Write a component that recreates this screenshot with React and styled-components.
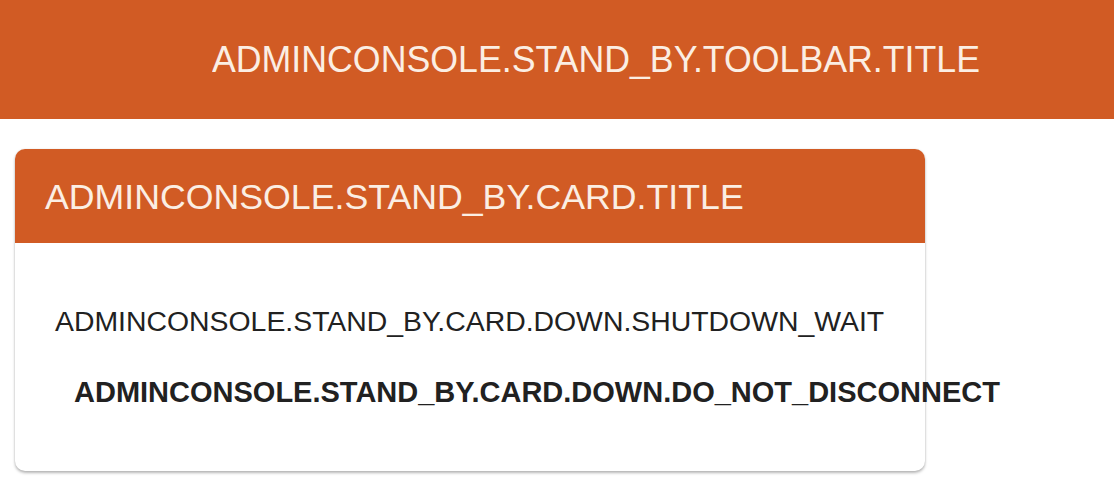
import React from "react";
import styled, { createGlobalStyle } from "styled-components";

const Global = createGlobalStyle`
  html, body { margin: 0; padding: 0; background: #ffffff; }
  body { font-family: "Liberation Sans", Arial, sans-serif; color: #212121; }
`;

const Toolbar = styled.header`
  height: 119px;
  background: #d15b24;
  display: flex;
  align-items: center;
  padding-left: 212px;
`;

const ToolbarTitle = styled.h1`
  margin: 0;
  font-weight: 400;
  font-size: 36px;
  color: #fbeee3;
  line-height: 1;
  transform: scaleX(0.992);
  transform-origin: left center;
`;

const Content = styled.main`
  padding: 30px 15px;
  width: 910px;
`;

const Card = styled.section`
  background: #fff;
  border-radius: 10px;
  box-shadow: 0 2px 3px rgba(0, 0, 0, 0.28), 0 0 2px rgba(0, 0, 0, 0.1);
  height: 322px;
  display: flex;
  flex-direction: column;
`;

const CardHeader = styled.div`
  height: 94px;
  box-sizing: border-box;
  padding: 3px 0 0 30px;
  background: #d15b24;
  border-radius: 10px 10px 0 0;
  display: flex;
  align-items: center;
`;

const CardTitle = styled.h2`
  margin: 0;
  font-weight: 400;
  font-size: 35.7px;
  color: #fbeee3;
  line-height: 1;
`;

const CardBody = styled.div`
  padding: 64px 40px 0;
  display: flex;
  flex-direction: column;
  gap: 43px;
`;

const Message = styled.p`
  margin: 0;
  font-size: ${(p) => (p.$strong ? "29px" : "28.4px")};
  line-height: 1;
  white-space: nowrap;
  font-weight: ${(p) => (p.$strong ? 700 : 400)};
  padding-left: ${(p) => (p.$indent ? "19px" : "0")};
  color: #212121;
`;

export default function App() {
  return (
    <>
      <Global />
      <Toolbar>
        <ToolbarTitle>ADMINCONSOLE.STAND_BY.TOOLBAR.TITLE</ToolbarTitle>
      </Toolbar>
      <Content>
        <Card>
          <CardHeader>
            <CardTitle>ADMINCONSOLE.STAND_BY.CARD.TITLE</CardTitle>
          </CardHeader>
          <CardBody>
            <Message>ADMINCONSOLE.STAND_BY.CARD.DOWN.SHUTDOWN_WAIT</Message>
            <Message $strong $indent>
              ADMINCONSOLE.STAND_BY.CARD.DOWN.DO_NOT_DISCONNECT
            </Message>
          </CardBody>
        </Card>
      </Content>
    </>
  );
}
